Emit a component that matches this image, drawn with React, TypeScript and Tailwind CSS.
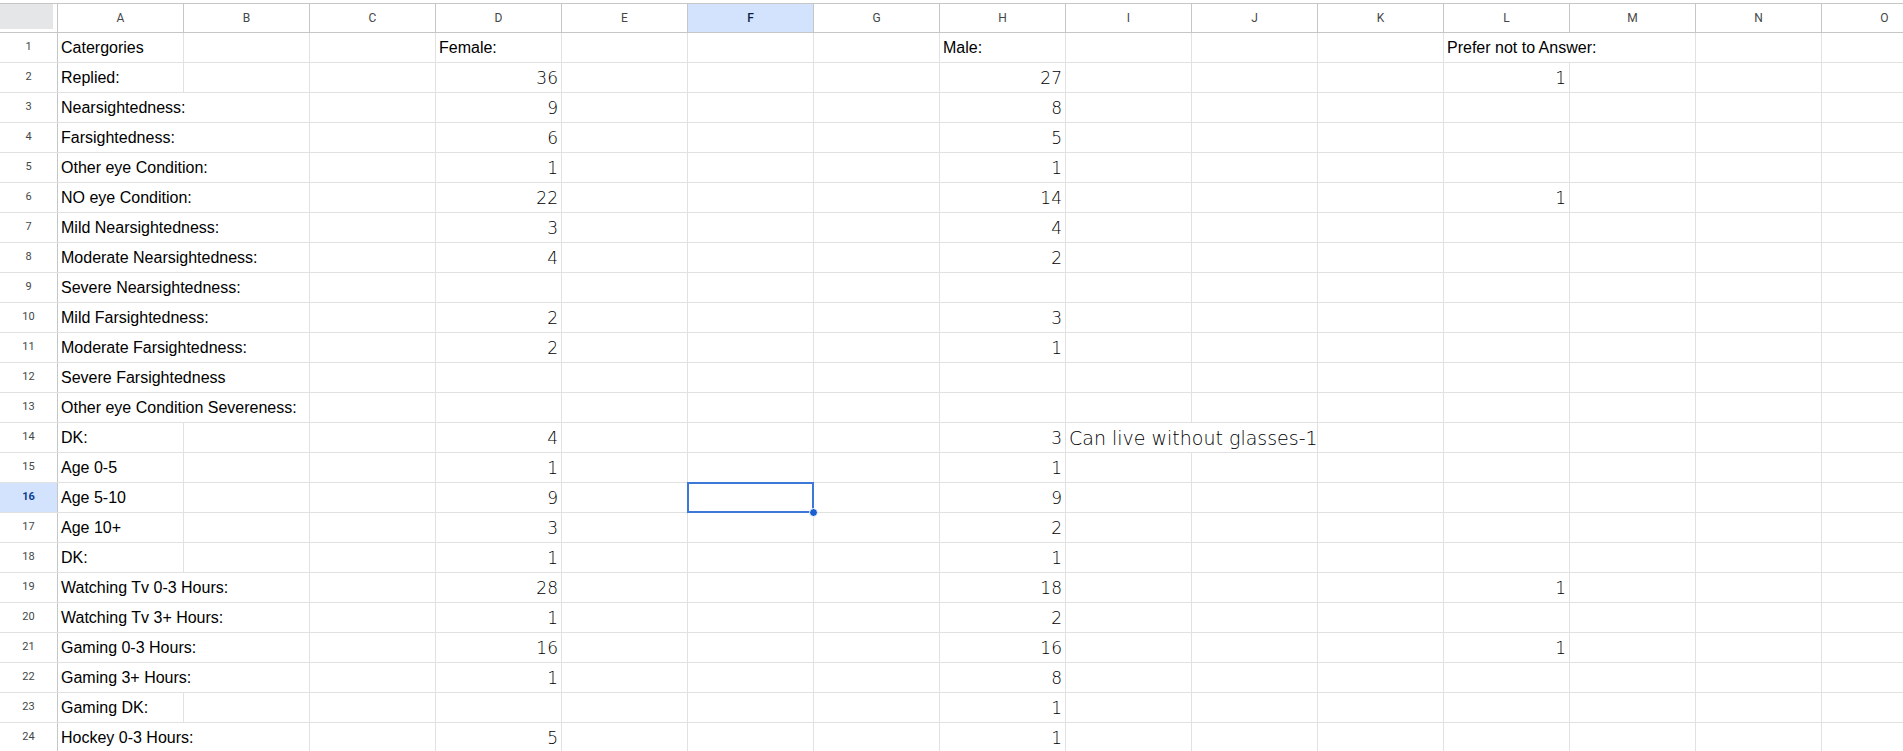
import React from 'react';

type Row = {
  label?: string;
  labelSpan?: number;
  d?: string | number;
  h?: string | number;
  l?: string | number;
  i?: string;
};

const COLS = ['A', 'B', 'C', 'D', 'E', 'F', 'G', 'H', 'I', 'J', 'K', 'L', 'M', 'N', 'O'];

const rows: Row[] = [
  { label: 'Catergories', labelSpan: 1, d: 'Female:', h: 'Male:', l: 'Prefer not to Answer:' },
  { label: 'Replied:', labelSpan: 1, d: 36, h: 27, l: 1 },
  { label: 'Nearsightedness:', labelSpan: 2, d: 9, h: 8 },
  { label: 'Farsightedness:', labelSpan: 2, d: 6, h: 5 },
  { label: 'Other eye Condition:', labelSpan: 2, d: 1, h: 1 },
  { label: 'NO eye Condition:', labelSpan: 2, d: 22, h: 14, l: 1 },
  { label: 'Mild Nearsightedness:', labelSpan: 2, d: 3, h: 4 },
  { label: 'Moderate Nearsightedness:', labelSpan: 2, d: 4, h: 2 },
  { label: 'Severe Nearsightedness:', labelSpan: 2 },
  { label: 'Mild Farsightedness:', labelSpan: 2, d: 2, h: 3 },
  { label: 'Moderate Farsightedness:', labelSpan: 2, d: 2, h: 1 },
  { label: 'Severe Farsightedness', labelSpan: 2 },
  { label: 'Other eye Condition Severeness:', labelSpan: 2 },
  { label: 'DK:', labelSpan: 1, d: 4, h: 3, i: 'Can live without glasses-1' },
  { label: 'Age 0-5', labelSpan: 1, d: 1, h: 1 },
  { label: 'Age 5-10', labelSpan: 1, d: 9, h: 9 },
  { label: 'Age 10+', labelSpan: 1, d: 3, h: 2 },
  { label: 'DK:', labelSpan: 1, d: 1, h: 1 },
  { label: 'Watching Tv 0-3 Hours:', labelSpan: 2, d: 28, h: 18, l: 1 },
  { label: 'Watching Tv 3+ Hours:', labelSpan: 2, d: 1, h: 2 },
  { label: 'Gaming 0-3 Hours:', labelSpan: 2, d: 16, h: 16, l: 1 },
  { label: 'Gaming 3+ Hours:', labelSpan: 2, d: 1, h: 8 },
  { label: 'Gaming DK:', labelSpan: 1, h: 1 },
  { label: 'Hockey 0-3 Hours:', labelSpan: 2, d: 5, h: 1 },
];

const SELECTED_COL = 'F';
const SELECTED_ROW = 16;

const gridCols = 'grid grid-cols-[58px_repeat(15,126px)]';
const spanClass: Record<number, string> = { 1: 'col-span-1', 2: 'col-span-2' };

const labelFont = "font-['Liberation_Sans',Arial,sans-serif] text-[16px] text-black";
const numberFont = "font-['DejaVu_Sans_ExtraLight','DejaVu_Sans',sans-serif] font-extralight text-[17px] text-black";
const noteFont = "font-['DejaVu_Sans_ExtraLight','DejaVu_Sans',sans-serif] font-extralight text-[19px] text-black";

function TextCell({ text, span = 1 }: { text: string; span?: number }) {
  return (
    <div
      className={`${spanClass[span]} h-full flex items-end pl-[3px] pb-[2px] border-r border-[#e1e1e1] whitespace-nowrap overflow-hidden ${labelFont}`}
    >
      {text}
    </div>
  );
}

function NumberCell({ value }: { value: number }) {
  return (
    <div
      className={`h-full flex items-end justify-end pr-[3px] pb-[1px] border-r border-[#e1e1e1] ${numberFont}`}
    >
      {value}
    </div>
  );
}

function NoteCell({ text }: { text: string }) {
  return (
    <div
      className={`col-span-2 h-full flex items-end pl-[3px] pb-0 border-r border-[#e1e1e1] whitespace-nowrap ${noteFont}`}
    >
      {text}
    </div>
  );
}

function EmptyCell({ selected }: { selected?: boolean }) {
  return (
    <div className="relative h-full border-r border-[#e1e1e1]">
      {selected && (
        <>
          <div className="absolute -left-px -top-px right-[-1px] bottom-[-1px] border-2 border-[#3b78d8] z-10" />
          <div className="absolute right-[-5px] bottom-[-5px] w-[9px] h-[9px] rounded-full bg-[#1a5fd0] border border-white z-20" />
        </>
      )}
    </div>
  );
}

function cellFor(value: string | number | undefined) {
  if (value === undefined) return null;
  return typeof value === 'number' ? 'num' : 'text';
}

function SheetRow({ row, index }: { row: Row; index: number }) {
  const rowNum = index + 1;
  const cells: React.ReactNode[] = [];
  let c = 0;
  while (c < COLS.length) {
    const col = COLS[c];
    const key = `${rowNum}-${col}`;
    if (col === 'A' && row.label) {
      const span = row.labelSpan ?? 1;
      cells.push(<TextCell key={key} text={row.label} span={span} />);
      c += span;
      continue;
    }
    if (col === 'I' && row.i) {
      cells.push(<NoteCell key={key} text={row.i} />);
      c += 2;
      continue;
    }
    const v = col === 'D' ? row.d : col === 'H' ? row.h : col === 'L' ? row.l : undefined;
    const kind = cellFor(v);
    if (kind === 'num') {
      cells.push(<NumberCell key={key} value={v as number} />);
    } else if (kind === 'text') {
      const span = col === 'L' ? 2 : 1;
      cells.push(<TextCell key={key} text={v as string} span={span} />);
      c += span;
      continue;
    } else {
      cells.push(<EmptyCell key={key} selected={col === SELECTED_COL && rowNum === SELECTED_ROW} />);
    }
    c += 1;
  }

  const active = rowNum === SELECTED_ROW;
  return (
    <div className={`${gridCols} h-[30px] border-b border-[#e1e1e1]`}>
      <div
        className={`h-full flex items-center justify-center border-r border-[#c4c7c5] font-['Roboto',Arial,sans-serif] text-[11px] ${
          active ? 'bg-[#d3e3fd] text-[#0b3d91] font-bold' : 'bg-white text-[#444746]'
        }`}
      >
        {rowNum}
      </div>
      {cells}
    </div>
  );
}

function ColumnHeader() {
  return (
    <div className={`${gridCols} h-[30px] border-t border-b border-[#c4c7c5]`}>
      <div className="h-full flex items-start border-r border-[#c4c7c5] bg-white">
        <div className="w-[53px] h-[25px] bg-[#e5e6e8]" />
      </div>
      {COLS.map((col) => (
        <div
          key={col}
          className={`h-full flex items-center justify-center border-r border-[#c4c7c5] font-['Roboto',Arial,sans-serif] text-[12px] ${
            col === SELECTED_COL ? 'bg-[#d3e3fd] text-[#0b1f44] font-medium' : 'bg-white text-[#444746]'
          }`}
        >
          {col}
        </div>
      ))}
    </div>
  );
}

export default function App() {
  return (
    <div className="w-full h-[751px] overflow-hidden bg-white">
      <div className="h-[3px] bg-white" />
      <ColumnHeader />
      {rows.map((row, i) => (
        <SheetRow key={i} row={row} index={i} />
      ))}
    </div>
  );
}
